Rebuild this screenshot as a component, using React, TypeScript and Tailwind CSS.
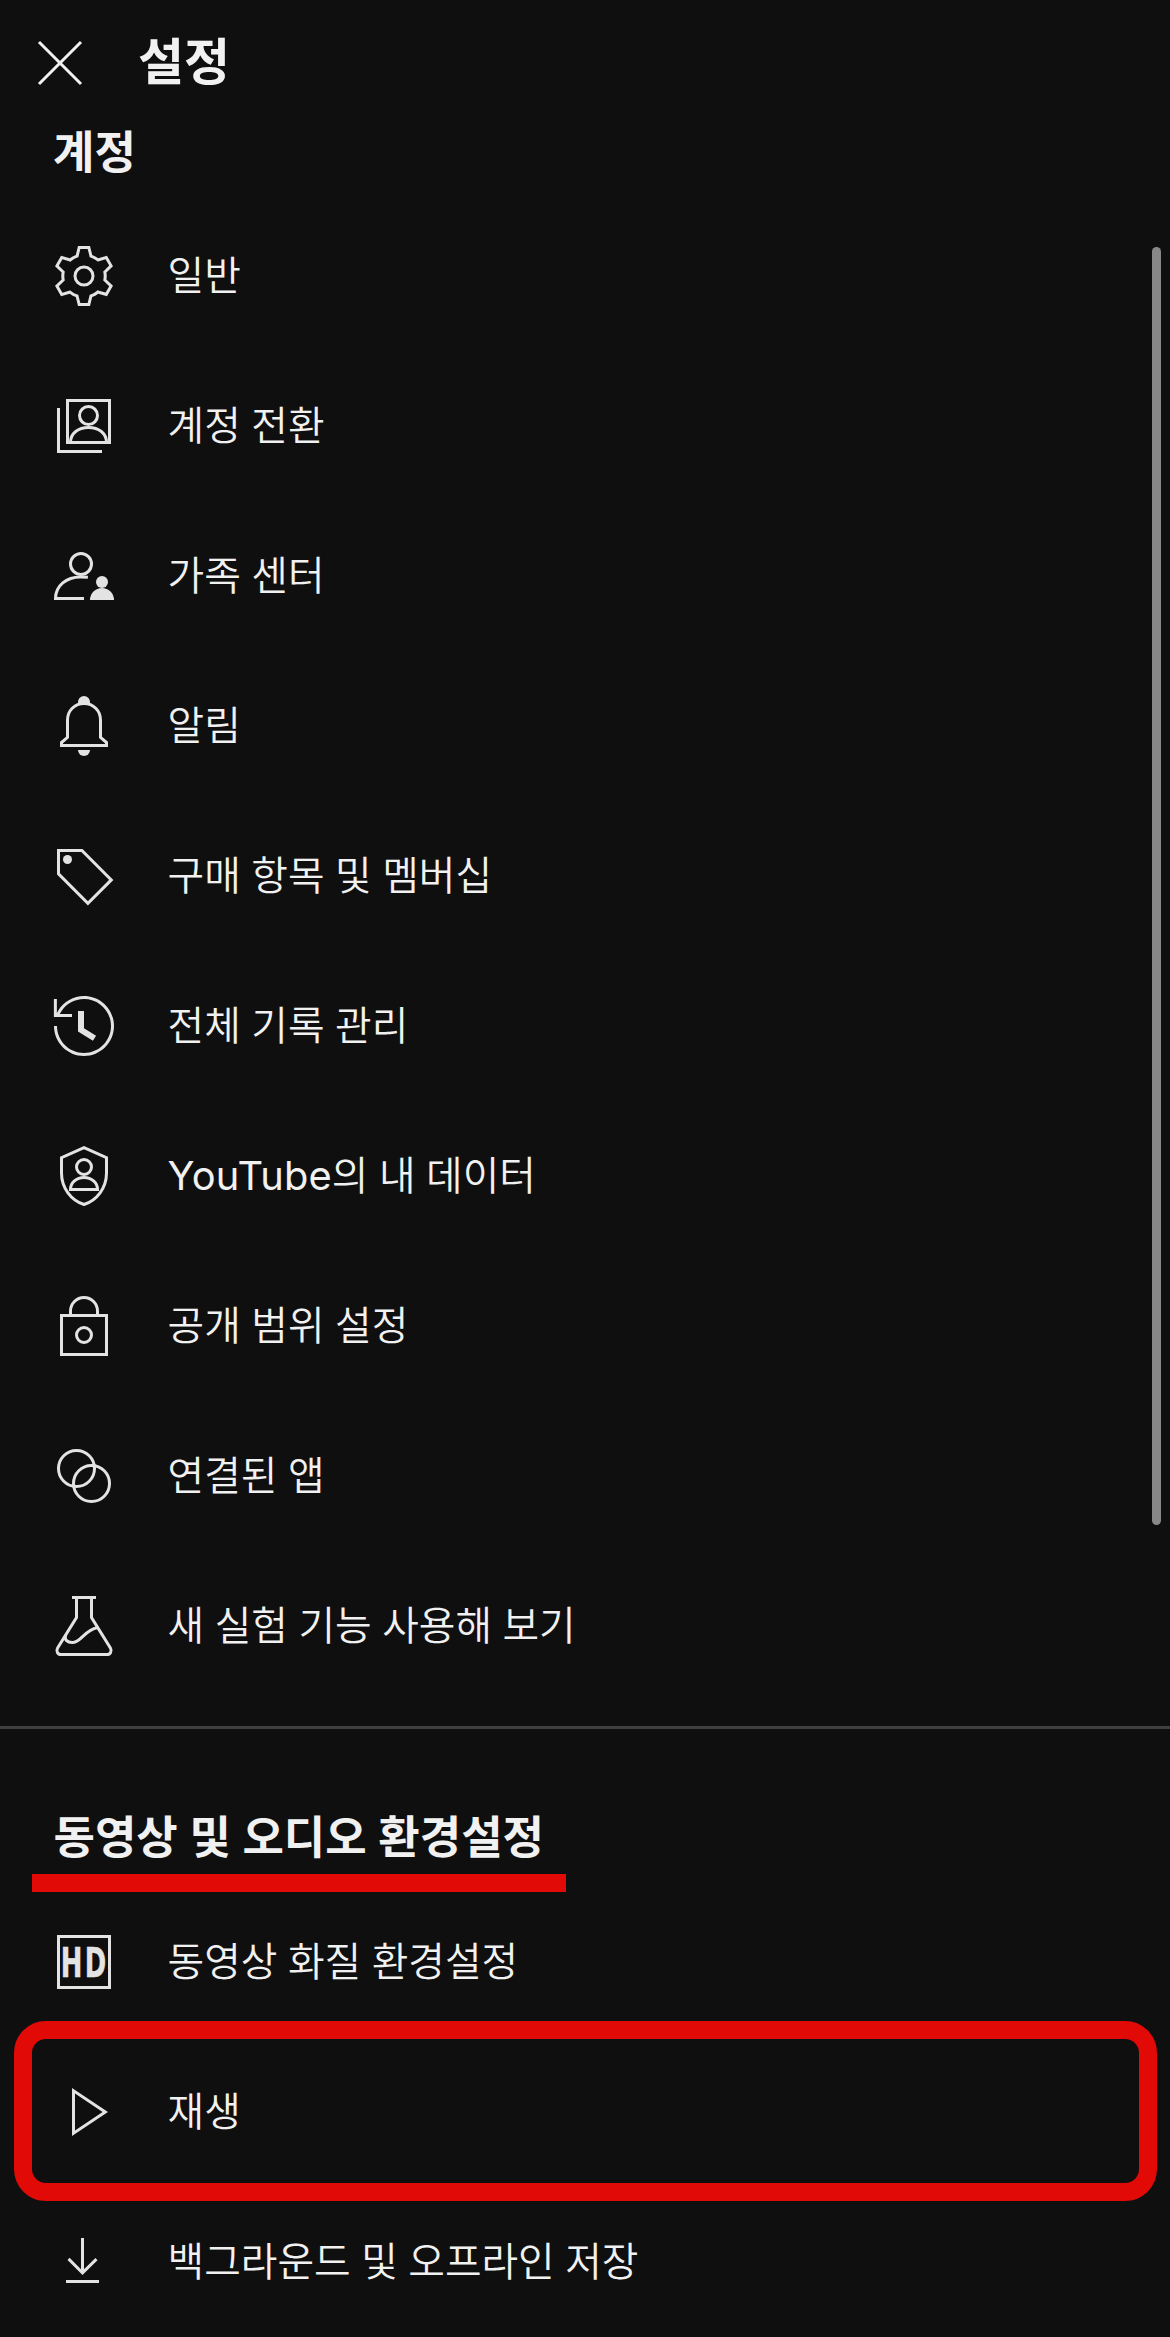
import type { ReactNode } from "react";

const stroke = { fill: "none", stroke: "currentColor", strokeWidth: 1 } as const;

function Icon({ children }: { children: ReactNode }) {
  return (
    <svg viewBox="0 0 24 24" className="size-[72px] shrink-0 text-[#e3e3e3]" fill="currentColor" aria-hidden="true">
      {children}
    </svg>
  );
}

const GearIcon = () => (
  <Icon>
    <circle cx="12" cy="12" r="3" {...stroke} />
    <path
      fillRule="evenodd"
      d="M14,2h-4L9.26,4.96c-0.73,0.27-1.4,0.66-2,1.14L4.34,5.27l-2,3.46l2.19,2.13C4.47,11.23,4.43,11.61,4.43,12s0.04,0.77,0.1,1.14l-2.19,2.13l2,3.46l2.92-0.83c0.6,0.48,1.27,0.87,2,1.14L10,22h4l0.74-2.96c0.73-0.27,1.4-0.66,2-1.14l2.92,0.83l2-3.46l-2.19-2.13c0.06-0.37,0.1-0.75,0.1-1.14s-0.04-0.77-0.1-1.14l2.19-2.13l-2-3.46L16.74,6.1c-0.6-0.48-1.27-0.87-2-1.14L14,2z M13.22,3l0.55,2.2l0.13,0.51l0.5,0.18c0.61,0.23,1.19,0.56,1.72,0.98l0.4,0.32l0.5-0.14l2.17-0.62l1.22,2.11l-1.63,1.59l-0.37,0.36l0.08,0.51c0.05,0.32,0.08,0.64,0.08,0.98s-0.03,0.66-0.08,0.98l-0.08,0.51l0.37,0.36l1.63,1.59l-1.22,2.11l-2.17-0.62l-0.5-0.14l-0.4,0.32c-0.53,0.43-1.11,0.76-1.72,0.98l-0.5,0.18l-0.13,0.51L13.22,21h-2.44l-0.55-2.2l-0.13-0.51l-0.5-0.18c-0.6-0.22-1.19-0.55-1.72-0.97l-0.4-0.33l-0.5,0.14l-2.17,0.62L3.6,15.44l1.63-1.59l0.37-0.36l-0.08-0.51C5.47,12.66,5.44,12.33,5.44,12s0.03-0.66,0.08-0.98l0.08-0.51l-0.37-0.36L3.6,8.56l1.22-2.11l2.17,0.62l0.5,0.14l0.4-0.32c0.53-0.44,1.11-0.77,1.72-0.99l0.5-0.18l0.13-0.51L10.78,3H13.22z"
    />
  </Icon>
);

const SwitchAccountIcon = () => (
  <Icon>
    <g {...stroke}>
      <path d="M3.5 6V20.5H18" />
      <rect x="6.5" y="3.5" width="14" height="14" />
      <circle cx="13.5" cy="8.5" r="3" />
      <path d="M7.5 17.5C7.5 14.4 10.1 12.5 13.5 12.5S19.5 14.4 19.5 17.5" />
    </g>
  </Icon>
);

const FamilyIcon = () => (
  <Icon>
    <g {...stroke}>
      <circle cx="11" cy="8" r="3.5" />
      <path d="M12 19.5H2.5C2.5 15.2 6.2 12.3 10.8 12.3Q12.2 12.3 13.3 12.4" />
    </g>
    <circle cx="18" cy="14" r="2" />
    <path d="M14 20a4 4 0 0 1 8 0z" />
  </Icon>
);

const BellIcon = () => (
  <Icon>
    <path d="M10 4.5V4a2 2 0 0 1 4 0v.5Q12 4 10 4.5z" />
    <path d="M6.5 15.8V10C6.5 6.9 8.9 4.5 12 4.5S17.5 6.9 17.5 10V15.8L19.5 17.5V18.5H4.5V17.5Z" {...stroke} />
    <path d="M10 20h4a2 2 0 0 1-4 0z" />
  </Icon>
);

const TagIcon = () => (
  <Icon>
    <path d="M3.5 3.5H11.3L21.1 13.3L13.3 21.1L3.5 11.3Z" {...stroke} />
    <circle cx="6.5" cy="6.5" r="1.5" />
  </Icon>
);

const HistoryIcon = () => (
  <Icon>
    <path d="M14.97,16.95L10,13.87V7h2v5.76l4.03,2.49L14.97,16.95z M22,12c0,5.51-4.49,10-10,10S2,17.51,2,12h1c0,4.96,4.04,9,9,9s9-4.04,9-9s-4.04-9-9-9C8.81,3,5.92,4.64,4.28,7.38C4.17,7.56,4.06,7.75,3.97,7.94C3.96,7.96,3.95,7.98,3.94,8H8v1H1.96V3h1v4.74C3,7.65,3.03,7.57,3.07,7.49C3.18,7.27,3.3,7.07,3.42,6.86C5.22,3.86,8.51,2,12,2C17.51,2,22,6.49,22,12z" />
  </Icon>
);

const ShieldIcon = () => (
  <Icon>
    <g {...stroke}>
      <path d="M12 2.55L19.5 5.9V11C19.5 16 16.3 20.1 12 21.5C7.7 20.1 4.5 16 4.5 11V5.9Z" />
      <circle cx="12" cy="9" r="2.5" />
      <path d="M7.5 16.5C7.5 14.2 9.5 12.5 12 12.5S16.5 14.2 16.5 16.5Z" />
    </g>
  </Icon>
);

const LockIcon = () => (
  <Icon>
    <g {...stroke}>
      <rect x="4.5" y="8.5" width="15" height="13" />
      <path d="M7.5 8.5V7a4.5 4.5 0 0 1 9 0V8.5" />
      <circle cx="12" cy="15" r="2.5" />
    </g>
  </Icon>
);

const LinkedIcon = () => (
  <Icon>
    <g {...stroke}>
      <circle cx="9.5" cy="9.5" r="6" />
      <circle cx="14.5" cy="14.5" r="6" />
    </g>
  </Icon>
);

const FlaskIcon = () => (
  <Icon>
    <g {...stroke}>
      <path d="M8 2.5H16" />
      <path d="M9.5 2.5V9.2L3.2 19.3C2.6 20.4 3.2 21.5 4.4 21.5H19.6C20.8 21.5 21.4 20.4 20.8 19.3L14.5 9.2V2.5" />
      <path d="M5.9 15.1C5.3 16.6 6.5 17.6 8.3 17.5C11.3 17.3 11.8 13.5 16.6 12.5" />
    </g>
  </Icon>
);

const HdIcon = () => (
  <Icon>
    <rect x="3.5" y="3.5" width="17" height="17" {...stroke} />
    <text
      transform="scale(0.63 1)"
      x="6.75 19.4"
      y="17"
      fontSize="13.7"
      fontWeight="700"
      fontFamily="'DejaVu Sans', sans-serif"
      stroke="currentColor"
      strokeWidth="0.15"
    >
      HD
    </text>
  </Icon>
);

const PlayIcon = () => (
  <Icon>
    <path fillRule="evenodd" d="M9,5.87L18.2,12L9,18.13V5.87 M8,4v16l12-8L8,4z" />
  </Icon>
);

const DownloadIcon = () => (
  <Icon>
    <path d="M17,18v1H6v-1H17z M16.5,11.4l-0.7-0.7L12,14.4V4h-1v10.4l-3.8-3.8l-0.7,0.7l5,5L16.5,11.4z" />
  </Icon>
);

type Item = { label: string; brand?: string; Glyph: () => ReactNode; highlighted?: boolean };

const accountItems: Item[] = [
  { label: "일반", Glyph: GearIcon },
  { label: "계정 전환", Glyph: SwitchAccountIcon },
  { label: "가족 센터", Glyph: FamilyIcon },
  { label: "알림", Glyph: BellIcon },
  { label: "구매 항목 및 멤버십", Glyph: TagIcon },
  { label: "전체 기록 관리", Glyph: HistoryIcon },
  { brand: "YouTube", label: "의 내 데이터", Glyph: ShieldIcon },
  { label: "공개 범위 설정", Glyph: LockIcon },
  { label: "연결된 앱", Glyph: LinkedIcon },
  { label: "새 실험 기능 사용해 보기", Glyph: FlaskIcon },
];

const playbackItems: Item[] = [
  { label: "동영상 화질 환경설정", Glyph: HdIcon },
  { label: "재생", Glyph: PlayIcon, highlighted: true },
  { label: "백그라운드 및 오프라인 저장", Glyph: DownloadIcon },
];

function Row({ label, brand, Glyph, highlighted }: Item) {
  return (
    <li className="relative flex h-[150px] items-center gap-[47.6px] pl-12">
      <Glyph />
      <span className="pt-[2px] text-[39.8px] leading-[60px] font-[350] whitespace-nowrap [word-spacing:0.8px]">
        {brand && <span className="font-['Inter'] leading-none font-normal tracking-[0.15px]">{brand}</span>}
        {label}
      </span>
      {highlighted && (
        <span className="absolute top-[-16.5px] right-[13.3px] left-[13.5px] h-[180px] rounded-[32px] border-[18px] border-[#e10a07]" />
      )}
    </li>
  );
}

export default function App() {
  return (
    <main className="relative h-[2337px] w-[1170px] overflow-hidden bg-[#0f0f0f] font-['Roboto','Noto_Sans_CJK_KR',sans-serif] text-[#f1f1f1]">
      <header className="flex h-[126px] items-center gap-[42px] pl-6">
        <svg viewBox="0 0 24 24" className="size-[72px]" {...stroke} aria-hidden="true">
          <path d="M5 5L19 19M19 5L5 19" />
        </svg>
        <h1 className="text-[50px] leading-[72px] font-bold">설정</h1>
      </header>

      <section>
        <h2 className="flex h-[75px] items-start pt-px pl-[53px] text-[45px] leading-[54px] font-bold">계정</h2>
        <ul>
          {accountItems.map((item) => (
            <Row key={item.label} {...item} />
          ))}
        </ul>
      </section>

      <hr className="mt-[25px] h-[3px] border-0 bg-[#3f3f3f]" />

      <section>
        <div className="flex h-[158px] flex-col items-start pt-[83px]">
          <h2 className="pl-[53.5px] text-[45px] leading-[54px] font-bold whitespace-nowrap [word-spacing:0.5px]">
            동영상 및 오디오 환경설정
          </h2>
          <div className="mt-[8px] ml-8 h-[18px] w-[534px] shrink-0 bg-[#e10a07]" />
        </div>
        <ul>
          {playbackItems.map((item) => (
            <Row key={item.label} {...item} />
          ))}
        </ul>
      </section>

      <div className="absolute top-[247px] right-[9px] h-[1278px] w-[9px] rounded-full bg-[#888888]" />
    </main>
  );
}
